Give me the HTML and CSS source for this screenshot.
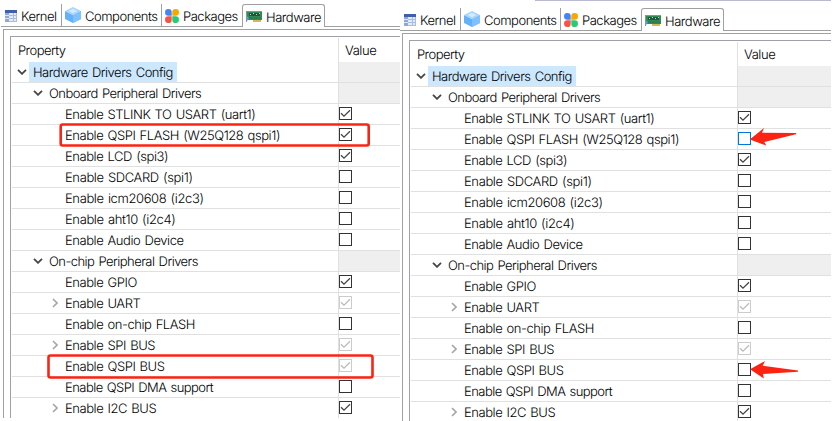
FILE: index.html
```html
<!DOCTYPE html>
<html lang="en">
<head>
<meta charset="utf-8">
<title>Hardware settings</title>
<link rel="stylesheet" href="styles.css">
</head>
<body>
<svg class="defs" aria-hidden="true">
  <symbol id="kernel" viewBox="0 0 12 12"><path fill="#e4ebf8" d="M0 0h12v12H0z"/><path fill="#8fa8dc" d="M0 3h4v9H0z"/><path fill="#3f5fae" d="M0 0h12v3H0z"/><path stroke="#a9bce4" d="M4 5.500h8M4 8.500h8M8.500 3v9M4 11.500h8M11.500 3v9"/><path stroke="#dce6f8" d="M0 5.500h4M0 8.500h4"/></symbol>
  <symbol id="cube" viewBox="0 0 16 16"><path fill="#64b1fb" d="M0 4l8 4 8-4v8l-8 4-8-4z"/><path fill="#7fc0ff" d="M8 8l8-4v8l-8 4z"/><path fill="#a5d5ff" d="M0 4l8-4 8 4-8 4z"/><path fill="#d3ebff" d="M3.500 4L8 1.800 12.500 4 8 6.200z"/></symbol>
  <symbol id="packages" viewBox="0 0 14 14"><path fill="#4285f4" d="M3.500 0A3.200 3.200 0 0 1 6.700 3.300V6.700H3.300A3.300 3.300 0 0 1 3.500 0z"/><path fill="#f9a602" d="M10.500 0A3.200 3.200 0 0 0 7.300 3.300V6.700H10.700A3.300 3.300 0 0 0 10.500 0z"/><path fill="#fa5246" d="M3.500 14A3.200 3.200 0 0 0 6.700 10.700V7.300H3.300A3.300 3.300 0 0 0 3.500 14z"/><path fill="#27cc71" d="M10.500 14A3.200 3.200 0 0 1 7.300 10.700V7.300H10.700A3.300 3.300 0 0 1 10.500 14z"/></symbol>
  <symbol id="board" viewBox="0 0 16 11"><path fill="#2f8a55" d="M1 0h15v9H1z"/><path fill="#62ad7d" d="M1 0h15v1H1z"/><path fill="#24543c" d="M3 2h11v3H3z"/><path fill="#c4d9c8" d="M4 3h1v1H4zM7 2h1v1H7zM10 3h1v1h-1zM13 2h1v1h-1z"/><path fill="#2f7d50" d="M3 6h12v2H3z"/><path fill="#7d9a9a" d="M0 0h1v11H0z"/><path fill="#46a9dc" d="M1 5l2 2.500L1 10z"/><path fill="#d9b655" d="M7 9h8v2H7z"/></symbol>
  <symbol id="down" viewBox="0 0 10 6"><path fill="none" stroke="#444" stroke-width="1.800" d="M1 .8l4 4 4-4"/></symbol>
  <symbol id="right" viewBox="0 0 6 10"><path fill="none" stroke="#a6a6a6" stroke-width="1.600" d="M1 1l4 4-4 4"/></symbol>
  <symbol id="tick" viewBox="0 0 11 11"><path fill="none" stroke="currentColor" stroke-width="1.300" d="M1 5.200l3 3 6-6"/></symbol>
</svg>
<main class="screen">
  <section class="panel left">
    <nav class="tabs">
      <div class="tab kernel"><svg><use href="#kernel"/></svg><span>Kernel</span></div>
      <div class="tab components"><svg><use href="#cube"/></svg><span>Components</span></div>
      <div class="tab packages"><svg><use href="#packages"/></svg><span>Packages</span></div>
      <div class="tab active"><svg><use href="#board"/></svg><span>Hardware</span></div>
      <div class="rest"></div>
    </nav>
    <div class="frame"><div class="tree">
      <div class="head"><span>Property</span><b>Value</b></div>
      <div class="row l1"><div class="name"><svg class="down"><use href="#down"/></svg><span class="selected">Hardware Drivers Config</span></div><div class="value group"></div></div>
      <div class="row l2"><div class="name"><svg class="down"><use href="#down"/></svg><span>Onboard Peripheral Drivers</span></div><div class="value group"></div></div>
      <div class="row"><div class="name"><span>Enable STLINK TO USART (uart1)</span></div><div class="value"><i class="check"><svg><use href="#tick"/></svg></i></div></div>
      <div class="row"><div class="name"><span>Enable QSPI FLASH (W25Q128 qspi1)</span></div><div class="value"><i class="check"><svg><use href="#tick"/></svg></i></div></div>
      <div class="row"><div class="name"><span>Enable LCD (spi3)</span></div><div class="value"><i class="check"><svg><use href="#tick"/></svg></i></div></div>
      <div class="row loose"><div class="name"><span>Enable SDCARD (spi1)</span></div><div class="value"><i class="check"></i></div></div>
      <div class="row loose"><div class="name"><span>Enable icm20608 (i2c3)</span></div><div class="value"><i class="check"></i></div></div>
      <div class="row loose"><div class="name"><span>Enable aht10 (i2c4)</span></div><div class="value"><i class="check"></i></div></div>
      <div class="row"><div class="name"><span>Enable Audio Device</span></div><div class="value"><i class="check"></i></div></div>
      <div class="row l2"><div class="name"><svg class="down"><use href="#down"/></svg><span>On-chip Peripheral Drivers</span></div><div class="value group"></div></div>
      <div class="row"><div class="name"><span>Enable GPIO</span></div><div class="value"><i class="check"><svg><use href="#tick"/></svg></i></div></div>
      <div class="row"><div class="name"><svg class="right"><use href="#right"/></svg><span>Enable UART</span></div><div class="value"><i class="check off"><svg><use href="#tick"/></svg></i></div></div>
      <div class="row"><div class="name"><span>Enable on-chip FLASH</span></div><div class="value"><i class="check"></i></div></div>
      <div class="row"><div class="name"><svg class="right"><use href="#right"/></svg><span>Enable SPI BUS</span></div><div class="value"><i class="check off"><svg><use href="#tick"/></svg></i></div></div>
      <div class="row"><div class="name"><span>Enable QSPI BUS</span></div><div class="value"><i class="check off"><svg><use href="#tick"/></svg></i></div></div>
      <div class="row tight"><div class="name"><span>Enable QSPI DMA support</span></div><div class="value"><i class="check"></i></div></div>
      <div class="row"><div class="name"><svg class="right"><use href="#right"/></svg><span>Enable I2C BUS</span></div><div class="value"><i class="check"><svg><use href="#tick"/></svg></i></div></div>
    </div></div>
  </section>
  <section class="panel second">
    <nav class="tabs">
      <div class="tab kernel"><svg><use href="#kernel"/></svg><span>Kernel</span></div>
      <div class="tab components"><svg><use href="#cube"/></svg><span>Components</span></div>
      <div class="tab packages"><svg><use href="#packages"/></svg><span>Packages</span></div>
      <div class="tab active"><svg><use href="#board"/></svg><span>Hardware</span></div>
      <div class="rest"></div>
    </nav>
    <div class="frame"><div class="tree">
      <div class="head"><span>Property</span><b>Value</b></div>
      <div class="row l1"><div class="name"><svg class="down"><use href="#down"/></svg><span class="selected">Hardware Drivers Config</span></div><div class="value group"></div></div>
      <div class="row l2"><div class="name"><svg class="down"><use href="#down"/></svg><span>Onboard Peripheral Drivers</span></div><div class="value group"></div></div>
      <div class="row"><div class="name"><span>Enable STLINK TO USART (uart1)</span></div><div class="value"><i class="check"><svg><use href="#tick"/></svg></i></div></div>
      <div class="row"><div class="name"><span>Enable QSPI FLASH (W25Q128 qspi1)</span></div><div class="value"><i class="check focus"></i></div></div>
      <div class="row"><div class="name"><span>Enable LCD (spi3)</span></div><div class="value"><i class="check"><svg><use href="#tick"/></svg></i></div></div>
      <div class="row loose"><div class="name"><span>Enable SDCARD (spi1)</span></div><div class="value"><i class="check"></i></div></div>
      <div class="row loose"><div class="name"><span>Enable icm20608 (i2c3)</span></div><div class="value"><i class="check"></i></div></div>
      <div class="row loose"><div class="name"><span>Enable aht10 (i2c4)</span></div><div class="value"><i class="check"></i></div></div>
      <div class="row"><div class="name"><span>Enable Audio Device</span></div><div class="value"><i class="check"></i></div></div>
      <div class="row l2"><div class="name"><svg class="down"><use href="#down"/></svg><span>On-chip Peripheral Drivers</span></div><div class="value group"></div></div>
      <div class="row"><div class="name"><span>Enable GPIO</span></div><div class="value"><i class="check"><svg><use href="#tick"/></svg></i></div></div>
      <div class="row"><div class="name"><svg class="right"><use href="#right"/></svg><span>Enable UART</span></div><div class="value"><i class="check off"><svg><use href="#tick"/></svg></i></div></div>
      <div class="row"><div class="name"><span>Enable on-chip FLASH</span></div><div class="value"><i class="check"></i></div></div>
      <div class="row"><div class="name"><svg class="right"><use href="#right"/></svg><span>Enable SPI BUS</span></div><div class="value"><i class="check off"><svg><use href="#tick"/></svg></i></div></div>
      <div class="row"><div class="name"><span>Enable QSPI BUS</span></div><div class="value"><i class="check"></i></div></div>
      <div class="row tight"><div class="name"><span>Enable QSPI DMA support</span></div><div class="value"><i class="check"></i></div></div>
      <div class="row"><div class="name"><svg class="right"><use href="#right"/></svg><span>Enable I2C BUS</span></div><div class="value"><i class="check"><svg><use href="#tick"/></svg></i></div></div>
    </div></div>
  </section>
  <svg class="marks" viewBox="0 0 836 421" aria-hidden="true">
    <path fill="#b9bad2" d="M535 0h296v1H535z"/>
    <g fill="none" stroke="#fd2313" stroke-width="2.600"><rect x="60.700" y="124.500" width="308" height="21" rx="2"/><rect x="48.500" y="355.500" width="324" height="22" rx="2"/></g>
    <path fill="#fd2313" d="M749.700 139.500L764 128l-2 4.800L796.300 133l-.3 1.200-31.700 7.800 2 3.500zM750 369.300L765 361l-2.300 4.700L798 370.600v1.200L763 374l.8 4.400z"/>
  </svg>
</main>
</body>
</html>
```
FILE: styles.css
```css
* { box-sizing: border-box; }
body { margin: 0; background: #fff; color: #000; font: 350 13px/20px Inter, "Liberation Sans", sans-serif; letter-spacing: -.44px; word-spacing: 1px; text-rendering: geometricPrecision; }
.defs { position: absolute; width: 0; height: 0; }
.screen { position: relative; display: flex; width: 836px; height: 421px; overflow: hidden; }
.panel { flex: none; overflow: hidden; }
.left { width: 400px; height: 418px; padding-top: 4px; }
.second { width: 432px; height: 421px; margin-left: -1px; padding-top: 8px; }
.tabs { display: flex; height: 23px; padding-left: 1px; letter-spacing: -.48px; }
.tab { display: flex; align-items: center; border-bottom: 1px solid #a0a0a0; border-right: 1px solid #a0a0a0; white-space: nowrap; }
.tab svg { flex: none; }
.tab span { padding-top: 3px; }
.kernel { width: 61px; padding-left: 4px; gap: 4px; }
.kernel svg { width: 12px; height: 12px; margin-top: 1px; }
.components { width: 100px; padding-left: 3px; gap: 4px; }
.components svg { width: 16px; height: 16px; }
.packages { width: 80px; padding-left: 3px; gap: 4px; border-right: 0; }
.packages svg { width: 14px; height: 14px; margin-top: 1px; }
.active { width: 83px; padding-left: 3px; gap: 4px; border: 1px solid #a0a0a0; border-bottom: 0; border-radius: 3px 3px 0 0; }
.active svg { width: 16px; height: 11px; }
.rest { flex: 1; border-bottom: 1px solid #a0a0a0; }
.frame { margin: 2px 0 0 3px; padding: 6px 0 0 6px; height: 400px; border: solid #a0a0a8; border-width: 1px 0 0 1px; }
.tree { height: 393px; border: solid #a0a0a8; border-width: 1px 0 0 1px; padding: 1px 0 0 1px; }
.head, .row { display: grid; grid-template-columns: 326px 1fr; }
.head { height: 24px; line-height: 26px; }
.head span { padding-left: 6px; letter-spacing: -.55px; }
.head b { border-left: 1px solid #e0e0e0; padding-left: 6px; font-weight: inherit; height: 24px; }
.row { height: 21px; border-bottom: 1px solid #e0e0e0; }
.name { display: flex; align-items: center; height: 20px; padding-left: 53px; white-space: nowrap; }
.name span { line-height: 20px; padding-top: 2px; }
.l1 .name { padding-left: 5px; letter-spacing: -.5px; }
.l2 .name { padding-left: 21px; letter-spacing: -.54px; }
.loose .name { letter-spacing: -.38px; }
.tight .name { letter-spacing: -.55px; }
.down { flex: none; width: 10px; height: 6px; }
.l1 .down { margin-right: 2px; }
.l2 .down { margin-right: 6px; }
.name .right { width: 6px; height: 10px; margin: 0 7px 0 -13px; }
.name .selected { background: #cce8ff; padding: 1px 4px 0; width: 148px; height: 20px; }
.value { height: 21px; border-left: 1px solid #e0e0e0; padding-top: 3px; }
.group { background: #efefef; border-bottom: 1px solid #e0e0e0; }
.check { display: block; width: 13px; height: 13px; border: 1px solid #333; background: #fff; color: #444; }
.check svg { display: block; width: 11px; height: 11px; }
.off { border-color: #ccc; color: #bbb; }
.focus { border-color: #0078d7; }
.marks { position: absolute; inset: 0; width: 836px; height: 421px; pointer-events: none; }
```
